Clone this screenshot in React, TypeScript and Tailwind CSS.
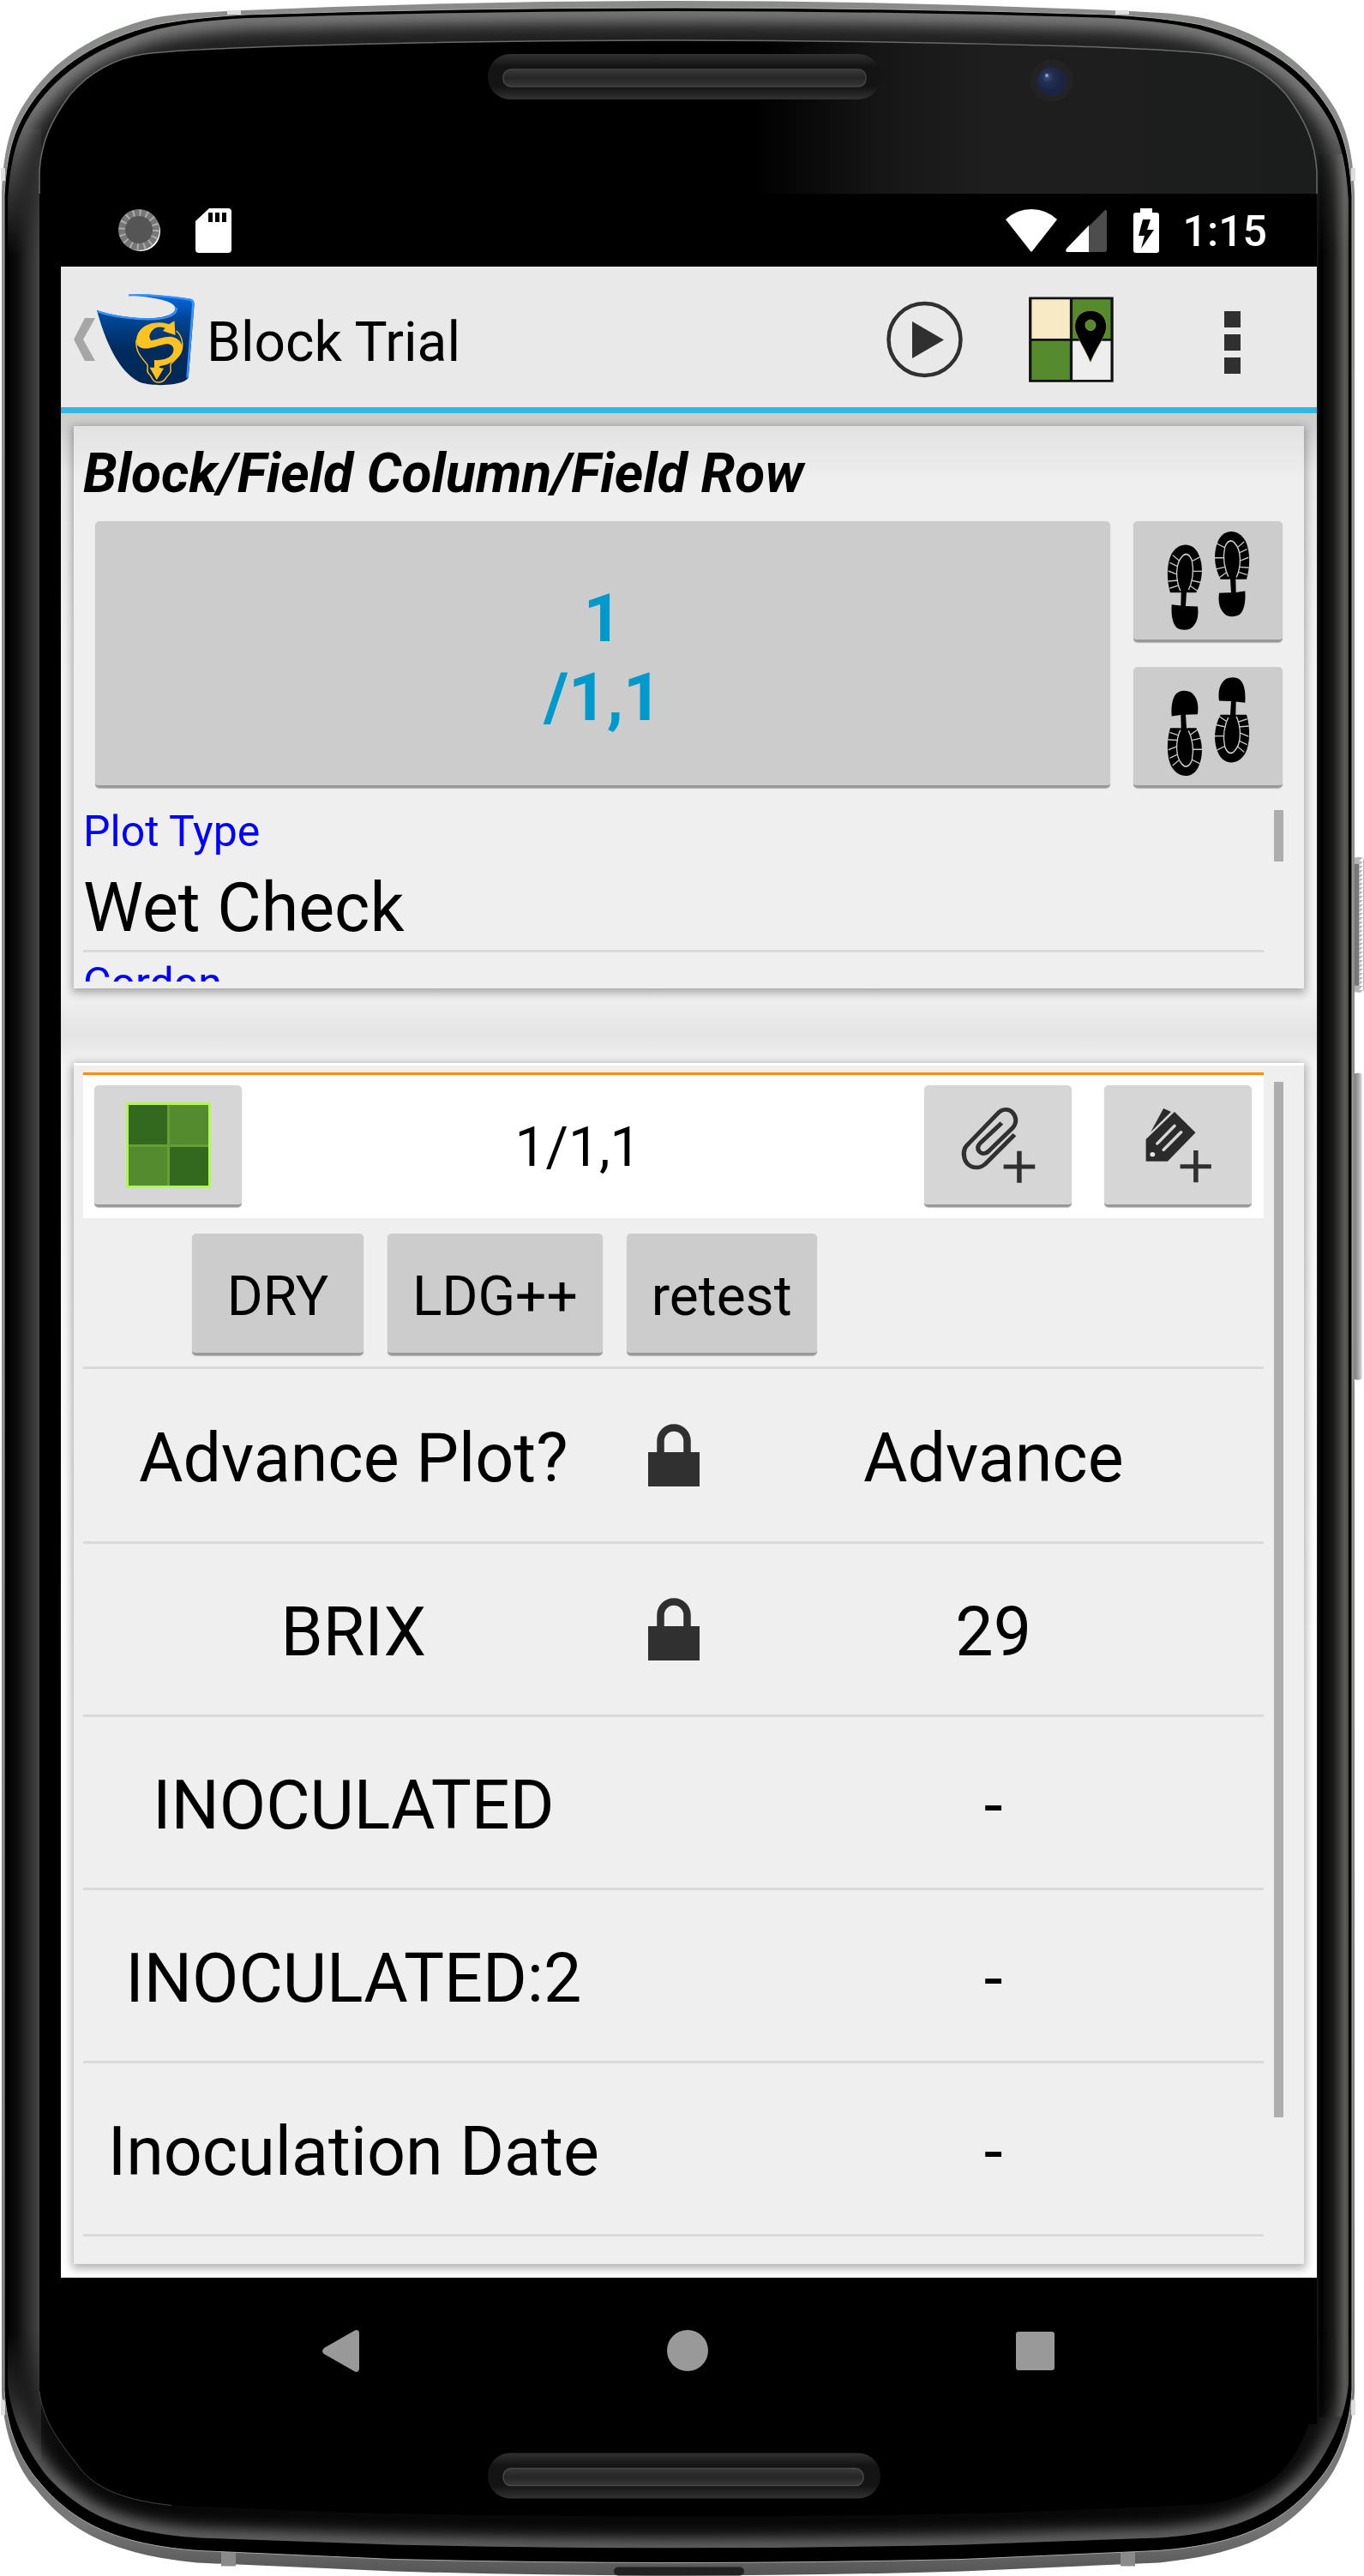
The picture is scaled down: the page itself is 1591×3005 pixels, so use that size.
import type { ReactNode } from "react";

const OUTER =
  "M2 225 C4 170 14 142 31 117 C62 70 110 38 179 21 C215 14 250 14 286 12 Q540 1 791 1 Q1042 1 1296 12 C1332 14 1367 14 1403 21 C1472 38 1520 70 1551 117 C1568 142 1578 170 1580 225 V2790 C1578 2840 1562 2880 1541 2903 C1500 2955 1450 2980 1352 2990 L1123 3000 Q950 3005 791 3005 Q630 3005 459 3000 L230 2990 C132 2980 82 2955 41 2903 C20 2880 4 2840 2 2790 Z";
const BLACK =
  "M5 228 C8 172 19 146 36 121 C67 76 114 46 181 29 C217 22 252 19 288 17 Q540 9 791 9 Q1042 9 1294 17 C1330 19 1365 22 1401 29 C1468 46 1515 76 1546 121 C1563 146 1574 172 1577 228 V2788 C1575 2832 1559 2870 1537 2895 C1497 2943 1447 2969 1350 2976 L1123 2986 Q950 2990 791 2990 Q630 2990 459 2986 L232 2976 C135 2969 85 2943 45 2895 C23 2870 7 2832 5 2788 Z";
const BEZEL =
  "M9 235 C12 180 23 150 41 125 C71 82 118 52 184 34 C219 26 254 23 290 21 Q540 13 791 13 Q1042 13 1292 21 C1328 23 1363 26 1398 34 C1464 52 1511 82 1541 125 C1559 150 1570 180 1573 235 V2780 C1570 2820 1550 2860 1528 2888 C1490 2930 1445 2955 1350 2961 L1123 2969 Q950 2973 791 2973 Q630 2973 459 2969 L232 2961 C137 2955 92 2930 54 2888 C32 2860 12 2820 9 2780 Z";
const GLASS =
  "M46 200 C48 165 60 140 82 110 C105 84 135 68 168 63 C220 57 280 56 327 54 Q560 47 791 47 Q1022 47 1255 54 C1302 56 1362 57 1414 63 C1447 68 1477 84 1500 110 C1522 140 1534 165 1536 200 V2790 C1530 2830 1515 2860 1496 2882 C1470 2908 1430 2922 1382 2923 L1190 2931 Q990 2936 791 2936 Q592 2936 392 2931 L200 2923 C152 2918 112 2906 92 2878 C70 2850 50 2825 46 2790 Z";

function PhoneFrame() {
  return (
    <svg
      className="absolute inset-0 h-full w-full"
      viewBox="0 0 1591 3005"
      preserveAspectRatio="none"
      aria-hidden="true"
    >
      <defs>
        <linearGradient id="ring" x1="0" y1="0" x2="0" y2="1">
          <stop offset="0" stopColor="#8a8c8a" />
          <stop offset=".5" stopColor="#8e8e8e" />
          <stop offset=".98" stopColor="#777" />
          <stop offset="1" stopColor="#555" />
        </linearGradient>
        <linearGradient id="left" x1="8" x2="46" y1="0" y2="0" gradientUnits="userSpaceOnUse">
          <stop offset="0" stopColor="#000" />
          <stop offset=".3" stopColor="#0c0c0c" />
          <stop offset="1" stopColor="#464646" />
        </linearGradient>
        <linearGradient id="right" x1="1537" x2="1574" y1="0" y2="0" gradientUnits="userSpaceOnUse">
          <stop offset="0" stopColor="#0d0f0f" />
          <stop offset=".1" stopColor="#000" />
          <stop offset=".5" stopColor="#1a1a19" />
          <stop offset=".85" stopColor="#5c5c58" />
          <stop offset="1" stopColor="#484846" />
        </linearGradient>
        <linearGradient id="glass" x1="46" x2="1536" y1="0" y2="0" gradientUnits="userSpaceOnUse">
          <stop offset=".56" stopColor="#000" />
          <stop offset=".66" stopColor="#161616" />
          <stop offset=".74" stopColor="#1e1e1e" />
          <stop offset="1" stopColor="#1b1d1c" />
        </linearGradient>
        <linearGradient id="topFade" x1="0" x2="0" y1="0" y2="300" gradientUnits="userSpaceOnUse">
          <stop offset="0" stopColor="#fff" />
          <stop offset=".4" stopColor="#fff" />
          <stop offset="1" stopColor="#000" />
        </linearGradient>
        <linearGradient id="bottomFade" x1="0" x2="0" y1="2720" y2="2900" gradientUnits="userSpaceOnUse">
          <stop offset="0" stopColor="#000" />
          <stop offset="1" stopColor="#fff" />
        </linearGradient>
        <linearGradient id="slot" x1="0" y1="0" x2="0" y2="1">
          <stop offset="0" stopColor="#303030" />
          <stop offset=".28" stopColor="#141414" />
          <stop offset=".72" stopColor="#141414" />
          <stop offset="1" stopColor="#333" />
        </linearGradient>
        <linearGradient id="grille" x1="0" y1="0" x2="0" y2="1">
          <stop offset="0" stopColor="#383838" />
          <stop offset=".5" stopColor="#262626" />
          <stop offset="1" stopColor="#383838" />
        </linearGradient>
        <radialGradient id="lens" cx=".35" cy=".35">
          <stop offset="0" stopColor="#3f5280" />
          <stop offset=".4" stopColor="#212f52" />
          <stop offset="1" stopColor="#1b2442" />
        </radialGradient>
        <linearGradient id="key" x1="0" x2="1" y1="0" y2="0">
          <stop offset="0" stopColor="#777" />
          <stop offset=".6" stopColor="#aaa" />
          <stop offset="1" stopColor="#e8e8e8" />
        </linearGradient>
        <pattern id="knurl" width="10" height="5" patternUnits="userSpaceOnUse">
          <rect width="10" height="5" fill="#b5b5b5" />
          <path d="M5 5L10 0V5Z" fill="#fff" />
        </pattern>
        <filter id="soft" x="-5%" y="-5%" width="110%" height="110%">
          <feGaussianBlur stdDeviation="9" />
        </filter>
        <clipPath id="bezelClip">
          <path d={BEZEL} />
        </clipPath>
        <mask id="topMask">
          <rect width="1591" height="300" fill="url(#topFade)" />
        </mask>
        <mask id="bottomMask">
          <rect y="2720" width="1591" height="285" fill="url(#bottomFade)" />
        </mask>
      </defs>

      <rect x="1579" y="1000" width="12" height="158" rx="4" fill="url(#knurl)" />
      <rect x="1579" y="1008" width="6" height="142" fill="#777" />
      <rect x="1579" y="1252" width="10" height="358" rx="4" fill="url(#key)" />

      <path d={OUTER} fill="url(#ring)" />
      <path d="M265 12h16v5h-16zM1301 12h16v5h-16zM1 196h5v15h-5zM1576 196h5v15h-5zM1 2800h5v18h-5zM1576 2800h5v18h-5z" fill="#ddd" />
      <path d="M258 2976h17v18h-17zM1307 2976h17v18h-17z" fill="#8a8a8a" />
      <rect x="716" y="2995" width="152" height="10" rx="5" fill="#222" />
      <path d={BLACK} fill="#000" stroke="#aaa" strokeWidth="1" />

      <g clipPath="url(#bezelClip)">
        <path d={BEZEL} fill="#161616" />
        <rect x="8" y="150" width="40" height="2720" fill="url(#left)" />
        <rect x="1537" y="180" width="38" height="2640" fill="url(#right)" />
        <g mask="url(#topMask)">
          <path d={BEZEL} fill="#202020" />
          <path d={BEZEL} fill="none" stroke="#808080" strokeWidth="26" filter="url(#soft)" />
        </g>
        <g mask="url(#bottomMask)">
          <path d={BEZEL} fill="#080808" />
          <path d={BEZEL} fill="none" stroke="#747474" strokeWidth="20" filter="url(#soft)" />
        </g>
      </g>
      <path d={GLASS} fill="#000" />
      <path
        d="M46 226 V200 C48 165 60 140 82 110 C105 84 135 68 168 63 C220 57 280 56 327 54 Q560 47 791 47 Q1022 47 1255 54 C1302 56 1362 57 1414 63 C1447 68 1477 84 1500 110 C1522 140 1534 165 1536 200 V226"
        fill="url(#glass)"
        stroke="#6a6a6a"
        strokeWidth="1.5"
      />
      <path d="M46 2790 C50 2825 70 2850 92 2878 C112 2906 152 2918 200 2923" fill="none" stroke="#444" />

      <rect x="569" y="63" width="458" height="53" rx="26" fill="url(#slot)" />
      <rect x="587" y="81" width="423" height="20" rx="9" fill="url(#grille)" stroke="#444" strokeWidth="1.5" />
      <rect x="569" y="2862" width="458" height="53" rx="26" fill="url(#slot)" />
      <rect x="587" y="2880" width="420" height="20" rx="9" fill="url(#grille)" stroke="#484848" strokeWidth="1.5" />
      <circle cx="1227" cy="94" r="25" fill="#232323" />
      <circle cx="1227" cy="95" r="17" fill="url(#lens)" />
      <circle cx="1221" cy="88" r="2" fill="#8f9cbd" />
    </svg>
  );
}

function StatusBar() {
  return (
    <div className="flex h-[85px] items-center bg-black pl-[66px] pr-[58px] text-white">
      <svg className="h-[54px] w-[52px]" viewBox="0 0 52 54" aria-label="Sync">
        <circle cx="27" cy="28" r="23" fill="#fff" />
        <circle cx="25" cy="26" r="24" fill="#777" />
        <circle cx="25" cy="26" r="19" fill="none" stroke="#aaa" strokeWidth="9" strokeDasharray="2 5.46" />
        <circle cx="25" cy="26" r="16" fill="#555" />
      </svg>
      <svg className="ml-[39px] h-[52px] w-[42px]" viewBox="0 0 42 52" aria-label="SD card">
        <path d="M16 0H38Q42 0 42 4V48Q42 52 38 52H4Q0 52 0 48V15Z" fill="#fff" />
        <path d="M15 5h5v11h-5zM23 5h5v11h-5zM31 5h5v11h-5z" fill="#000" />
      </svg>
      <svg className="ml-auto h-[50px] w-[60px]" viewBox="0 0 60 50" aria-label="Wi-Fi">
        <path d="M0 12Q13 0 30 0T60 12L31 49Q30 50 29 49Z" fill="#fff" />
      </svg>
      <svg className="ml-[10px] h-[50px] w-[48px]" viewBox="0 0 48 50" aria-label="Mobile signal">
        <path d="M46 1Q48 0 48 3V47Q48 50 45 50H27V20Z" fill="#4d4d4d" />
        <path d="M27 19V50H2Q-1 50 1 46Z" fill="#fff" />
      </svg>
      <svg className="ml-[31px] h-[52px] w-[30px]" viewBox="0 0 30 52" aria-label="Battery charging">
        <path d="M8 0H22V5H27Q30 5 30 8V49Q30 52 27 52H3Q0 52 0 49V8Q0 5 3 5H8Z" fill="#fff" />
        <path d="M11 13H20L16 25H24L9 47L13 32H6Z" fill="#000" />
      </svg>
      <time className="ml-[28px] pt-[3px] text-[50px] font-medium leading-none">1:15</time>
    </div>
  );
}

function Logo() {
  return (
    <svg className="h-[108px] w-[114px]" viewBox="148 126 320 324" preserveAspectRatio="none" aria-hidden="true">
      <defs>
        <linearGradient id="pail" x1="0" y1="130" x2="0" y2="450" gradientUnits="userSpaceOnUse">
          <stop offset="0" stopColor="#0a6be8" />
          <stop offset=".25" stopColor="#004798" />
          <stop offset=".6" stopColor="#002c5e" />
          <stop offset="1" stopColor="#002856" />
        </linearGradient>
      </defs>
      <path
        d="M148 186C200 205 280 216 330 214C380 210 406 197 405 177C400 152 330 140 250 133C320 127 400 138 455 146Q468 150 467 165L448 420Q446 428 436 433C400 452 320 452 285 436C215 395 175 290 148 186Z"
        fill="url(#pail)"
      />
      <path
        d="M151 190C200 209 280 219 330 217C384 214 410 199 409 177M252 133C320 130 400 140 453 149Q463 152 463 165L444 422"
        fill="none"
        stroke="#3592ff"
        strokeWidth="7"
      />
      <path
        d="M277 290C274 340 302 358 313 376C318 386 308 398 318 408C330 418 328 438 350 438C372 438 374 418 384 410C396 398 386 388 390 374C410 352 430 340 428 300C426 284 420 268 408 258"
        fill="none"
        stroke="#ffc220"
        strokeWidth="4"
      />
      <path
        d="M278 300C274 262 300 238 330 231C350 227 370 228 384 235L402 223L405 273L364 258L372 248C350 240 336 247 328 258C318 272 318 282 326 292C345 288 375 275 395 279C420 285 430 305 427 325C420 355 385 379 354 381L352 387L367 389L344 430L321 386L336 386L336 360C370 363 397 350 399 325C399 306 385 301 368 305C340 312 318 322 298 319C284 314 279 308 278 300Z"
        fill="#ffc220"
      />
    </svg>
  );
}

function PlotMapIcon() {
  return (
    <svg className="h-[100px] w-[99px]" viewBox="626 140 260 300" preserveAspectRatio="none" aria-hidden="true">
      <rect x="630" y="145" width="252" height="291" fill="#eee" />
      <rect x="630" y="145" width="125" height="146" fill="#f7eac4" />
      <rect x="755" y="145" width="127" height="146" fill="#558b2d" />
      <rect x="630" y="291" width="125" height="145" fill="#558b2d" />
      <path d="M630.500 145.500H881V435H630.500ZM756 145V436M630 291H882" fill="none" stroke="#111" strokeWidth="8.500" />
      <path
        fillRule="evenodd"
        d="M815 189C786 189 767 212 767 246C767 275 795 315 815 370C835 315 864 275 864 246C864 212 844 189 815 189ZM815 221A16 19 0 1 1 815 259A16 19 0 1 1 815 221Z"
        fill="#000"
        stroke="#c9b35a"
        strokeWidth="1.500"
      />
    </svg>
  );
}

function ActionBar() {
  return (
    <header className="flex h-[171px] items-center border-b-[7px] border-[#33b5e5] bg-[#e9e9e9] pl-[15px] pr-[89px] pt-[6px]">
      <button type="button" aria-label="Navigate up" className="flex items-center">
        <svg className="h-[50px] w-[25px]" viewBox="0 0 25 50" aria-hidden="true">
          <path d="M13 0H25L11 25L25 50H13L0 25Z" fill="#a6a6a6" />
        </svg>
        <span className="ml-[2px]">
          <Logo />
        </span>
      </button>
      <h1 className="ml-[14px] pt-[8px] text-[64px] leading-none text-black">Block Trial</h1>
      <button type="button" aria-label="Start" className="ml-auto">
        <svg className="h-[90px] w-[89px]" viewBox="0 0 89 90" aria-hidden="true">
          <circle cx="44.500" cy="45" r="42" fill="none" stroke="#303030" strokeWidth="4.500" />
          <path d="M30 24L67 45.500L30 67Z" fill="#303030" />
        </svg>
      </button>
      <button type="button" aria-label="Field map" className="ml-[77px]">
        <PlotMapIcon />
      </button>
      <button type="button" aria-label="More options" className="ml-[129px] flex flex-col gap-[8px] pt-[6px]">
        <span className="size-[19px] bg-[#303030]" />
        <span className="size-[19px] bg-[#303030]" />
        <span className="size-[19px] bg-[#303030]" />
      </button>
    </header>
  );
}

function Foot() {
  return (
    <g>
      <path
        d="M254 459C240 425 242 385 258 362C282 331 332 330 352 360C372 390 368 428 345 459Z"
        fill="#000"
      />
      <path
        d="M247 404L282 414M252 383L284 394M262 364L288 380M246 430L284 428M252 448L286 440M328 380L358 369M330 405L366 405M328 428L364 434M320 440L352 456"
        stroke="#ccc"
        strokeWidth="3"
      />
      <path
        d="M292 459C270 425 272 385 296 367C308 357 322 362 330 378C338 405 334 430 314 459Z"
        fill="#000"
        stroke="#ccc"
        strokeWidth="4"
      />
      <path d="M284 455L292 459L291 492L259 489C256 520 264 545 285 551Q305 556 325 550C350 538 354 515 350 494L308 493L311 459L330 457L318 452Z" fill="#000" />
    </g>
  );
}

function Footprints({ flipped = false }: { flipped?: boolean }) {
  return (
    <svg
      className="h-[119px] w-[99px]"
      viewBox="239 300 297 258"
      preserveAspectRatio="none"
      aria-hidden="true"
    >
      <g transform={flipped ? "translate(0 892) scale(1 -1)" : undefined}>
        <Foot />
      </g>
      <g transform={flipped ? "translate(775 858) scale(-1 -1)" : "translate(775 -34) scale(-1 1)"}>
        <Foot />
      </g>
    </svg>
  );
}

const BUTTON =
  "flex items-center justify-center rounded-[5px] border-b-[3px] border-[#999] shadow-[0_1px_1px_rgba(0,0,0,0.25)]";

function StepButton({ label, children }: { label: string; children: ReactNode }) {
  return (
    <button type="button" aria-label={label} className={`${BUTTON} h-[141px] w-[174px] bg-[#ccc]`}>
      {children}
    </button>
  );
}

function ToolButton({ label, children }: { label: string; children: ReactNode }) {
  return (
    <button type="button" aria-label={label} className={`${BUTTON} h-[142px] w-[172px] bg-[#d6d6d6]`}>
      {children}
    </button>
  );
}

const CARD = "bg-[#efefef] shadow-[0_3px_10px_2px_rgba(0,0,0,0.32)]";

function PlotCard() {
  return (
    <section className={`${CARD} bg-linear-to-b from-[#e2e2e2] to-[#efefef] to-10% pb-[8px]`}>
      <h2 className="flex h-[111px] items-center pl-[11px] text-[64px] font-bold italic leading-none text-black">
        Block/Field Column/Field Row
      </h2>
      <div className="flex gap-[27px] pl-[25px] pr-[25px]">
        <button
          type="button"
          className={`${BUTTON} flex-1 bg-[#ccc] pt-[12px] text-[78px] font-bold leading-[92px] text-[#0099cc]`}
        >
          <span>
            1<br />
            /1,1
          </span>
        </button>
        <div className="flex flex-col gap-[29px]">
          <StepButton label="Previous plot">
            <Footprints />
          </StepButton>
          <StepButton label="Next plot">
            <Footprints flipped />
          </StepButton>
        </div>
      </div>
      <div className="mt-[15px] flex gap-[12px] pl-[11px] pr-[24px]">
        <dl className="h-[211px] flex-1 overflow-hidden">
          <div className="border-b-[3px] border-[#d9d9d9] pb-[3px] pt-[6px]">
            <dt className="text-[50px] leading-[60px] text-[#0000ff]">Plot Type</dt>
            <dd className="mt-[13px] text-[79px] leading-[92px] text-black">Wet Check</dd>
          </div>
          <div className="pt-[6px]">
            <dt className="text-[50px] leading-[60px] text-[#0000ff]">Cordon</dt>
          </div>
        </dl>
        <div className="mt-[11px] h-[60px] w-[11px] bg-[#adadad]" />
      </div>
    </section>
  );
}

function GridIcon() {
  return (
    <svg className="h-[100px] w-[99px]" viewBox="0 0 99 100" aria-hidden="true">
      <rect width="99" height="100" fill="#aef850" />
      <rect x="3" y="3" width="93" height="94" fill="#64a034" />
      <path d="M3 3H48V49H3ZM51 52H96V97H51Z" fill="#33691e" />
      <path d="M51 3H96V49H51ZM3 52H48V97H3Z" fill="#558b2f" />
    </svg>
  );
}

function ClipIcon() {
  return (
    <svg className="h-[96px] w-[96px]" viewBox="266 204 262 288" preserveAspectRatio="none" aria-hidden="true">
      <path
        d="M450 311L358 412C344 426 328 430 310 421C290 409 284 380 292 358Q296 350 304 342L396 237C410 220 432 218 445 235C457 252 456 272 444 287L370 366C360 379 346 380 338 370C331 361 332 350 341 340L409 270"
        fill="none"
        stroke="#303030"
        strokeWidth="14"
      />
      <path d="M465 368V479M415 423H515" stroke="#303030" strokeWidth="15" />
    </svg>
  );
}

function TagIcon() {
  return (
    <svg className="h-[96px] w-[96px]" viewBox="842 204 262 288" preserveAspectRatio="none" aria-hidden="true">
      <path d="M927 219L951 231L886 302Z" fill="#2b2b2b" />
      <path d="M871 327L962 231L1029 304L940 404H871Z" fill="#2b2b2b" />
      <path d="M907 342L962 280M927 364L983 302" stroke="#d6d6d6" strokeWidth="10" strokeLinecap="round" />
      <circle cx="892" cy="380" r="8" fill="#e6e6e6" />
      <path d="M1030 366V478M980 422H1079" stroke="#303030" strokeWidth="15" />
    </svg>
  );
}

function LockIcon() {
  return (
    <svg className="mx-auto h-[73px] w-[60px]" viewBox="0 0 60 73" role="img" aria-label="Locked">
      <path d="M14.500 35V20A15.500 15.500 0 0 1 45.500 20V35" fill="none" stroke="#303030" strokeWidth="8.500" />
      <path d="M0 33H60V73H0Z" fill="#303030" />
    </svg>
  );
}

const TRAITS = [
  { name: "Advance Plot?", value: "Advance", locked: true },
  { name: "BRIX", value: "29", locked: true },
  { name: "INOCULATED", value: "-", locked: false },
  { name: "INOCULATED:2", value: "-", locked: false },
  { name: "Inoculation Date", value: "-", locked: false },
];

const TAGS = ["DRY", "LDG++", "retest"];

function TraitCard() {
  return (
    <section className={`${CARD} mt-[87px] border-t-[3px] border-white pb-[32px]`}>
      <div className="flex gap-[12px] pl-[11px] pr-[24px] pt-[8px]">
        <div className="flex-1">
          <div className="flex items-center border-t-[3px] border-[#ff8c00] bg-white pb-[13px] pl-[13px] pr-[14px] pt-[12px]">
            <ToolButton label="Plot grid">
              <GridIcon />
            </ToolButton>
            <p className="flex-1 pr-[12px] pt-[4px] text-center text-[64px] leading-none text-black">1/1,1</p>
            <div className="flex gap-[38px]">
              <ToolButton label="Add attachment">
                <ClipIcon />
              </ToolButton>
              <ToolButton label="Add tag">
                <TagIcon />
              </ToolButton>
            </div>
          </div>
          <div className="flex gap-[28px] border-b-[3px] border-[#d9d9d9] pb-[13px] pl-[127px] pt-[18px]">
            {TAGS.map((tag) => (
              <button
                key={tag}
                type="button"
                className={`${BUTTON} h-[142px] min-w-[200px] bg-[#ccc] px-[29px] pt-[8px] text-[64px] leading-none text-black`}
              >
                {tag}
              </button>
            ))}
          </div>
          <table className="w-full table-fixed text-center text-[79px] leading-[92px] text-black">
            <colgroup>
              <col />
              <col className="w-[116px]" />
              <col />
            </colgroup>
            <tbody>
              {TRAITS.map((trait) => (
                <tr key={trait.name} className="h-[202px] border-b-[3px] border-[#d9d9d9]">
                  <th scope="row" className="whitespace-nowrap p-0 pt-[8px] font-normal">
                    {trait.name}
                  </th>
                  <td className="p-0">{trait.locked && <LockIcon />}</td>
                  <td className="p-0 pt-[8px]">{trait.value}</td>
                </tr>
              ))}
            </tbody>
          </table>
        </div>
        <div className="mb-[139px] mt-[11px] w-[11px] bg-[#adadad]" />
      </div>
    </section>
  );
}

function NavigationBar() {
  return (
    <nav className="flex h-[171px] items-center justify-between bg-black pl-[304px] pr-[306px]">
      <button type="button" aria-label="Back">
        <svg className="h-[49px] w-[44px]" viewBox="0 0 44 49" aria-hidden="true">
          <path d="M38 1Q44 -2 44 5V44Q44 51 38 48L3 28Q-1 25 3 21Z" fill="#999" />
        </svg>
      </button>
      <button type="button" aria-label="Home" className="size-[48px] rounded-full bg-[#999]" />
      <button type="button" aria-label="Recent apps" className="size-[45px] rounded-[3px] bg-[#999]" />
    </nav>
  );
}

export default function App() {
  return (
    <div className="relative w-full bg-white pb-[177px] pl-[71px] pr-[55px] pt-[226px] font-['Roboto',sans-serif]">
      <PhoneFrame />
      <div className="relative">
        <StatusBar />
        <ActionBar />
        <main className="bg-[linear-gradient(to_bottom,#cdcdcd_0px,#cfcfcf_15px,#e9e9e9_70px,#f3f3f3_300px,#f3f3f3_670px,#e4e4e4_725px,#f3f3f3_760px,#fff_1500px)] pb-[16px] pl-[15px] pr-[15px] pt-[15px]">
          <PlotCard />
          <TraitCard />
        </main>
        <NavigationBar />
      </div>
    </div>
  );
}
